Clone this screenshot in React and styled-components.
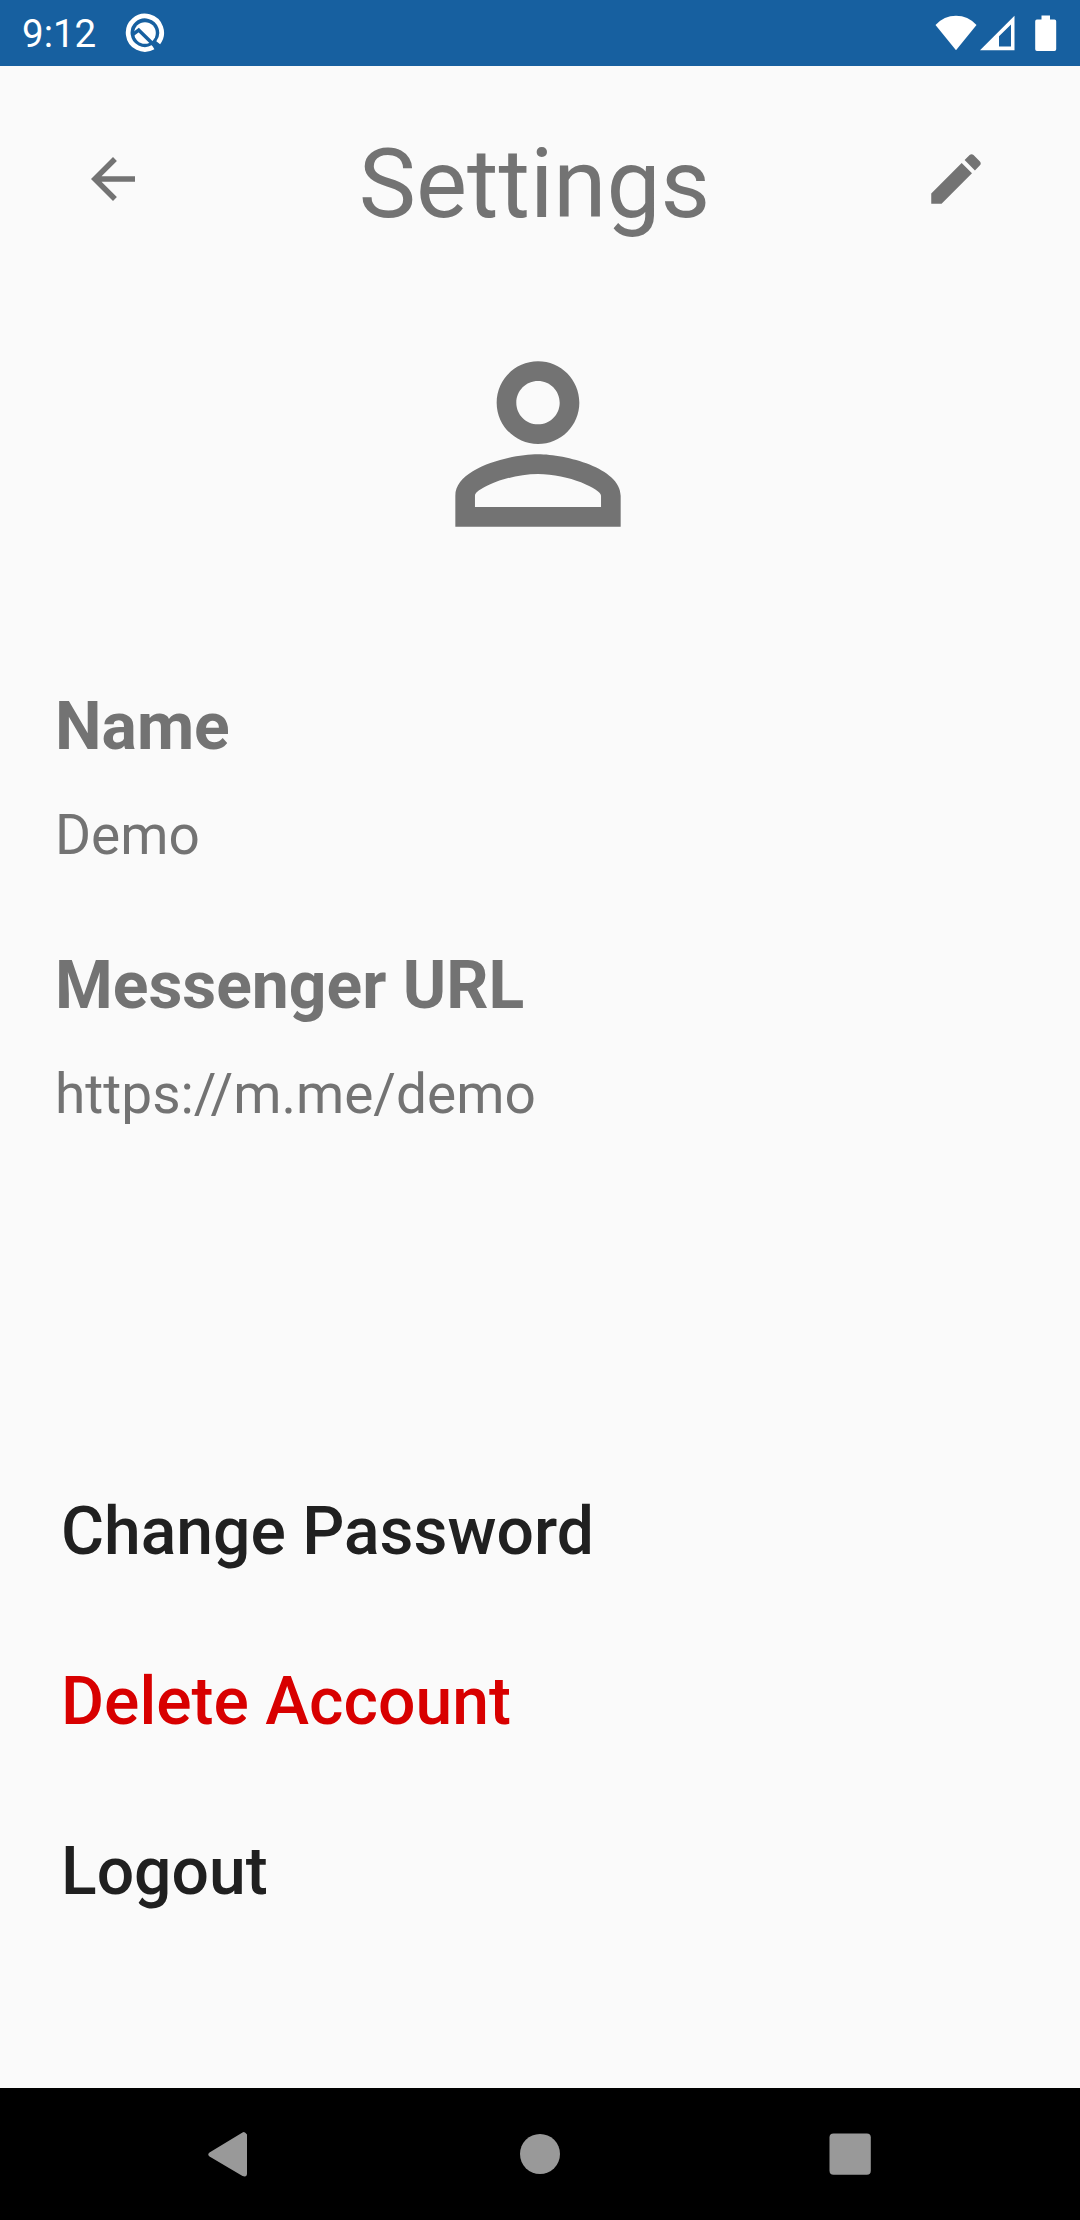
import React from "react";
import styled, { createGlobalStyle } from "styled-components";

const GlobalStyle = createGlobalStyle`
  * { box-sizing: border-box; }
  body { margin: 0; background: #fafafa; }
`;

const Screen = styled.div`
  display: flex;
  flex-direction: column;
  width: 1080px;
  height: 2220px;
  background: #fafafa;
  color: #737373;
  font-family: Roboto, "Liberation Sans", sans-serif;
`;

const StatusBar = styled.div`
  display: flex;
  justify-content: space-between;
  align-items: center;
  height: 66px;
  padding: 0 21px 0 22px;
  background: #1760a0;
  color: #fff;
`;

const StatusGroup = styled.div`
  display: flex;
  align-items: center;
  gap: ${(p) => p.$gap}px;
`;

const Clock = styled.span`
  font-size: 38.5px;
  line-height: 46px;
  padding-top: 2px;
`;

const Icon = styled.svg`
  display: block;
  flex: none;
  width: ${(p) => p.$w}px;
  height: ${(p) => p.$h || p.$w}px;
  fill: currentColor;
`;

const Header = styled.header`
  display: flex;
  justify-content: space-between;
  align-items: center;
  height: 226px;
  padding: 0 91px 0 80px;
`;

const IconButton = styled.button`
  padding: 0;
  border: 0;
  background: none;
  color: inherit;
`;

const Title = styled.h1`
  margin: 0;
  padding-top: 10px;
  font-size: 96.25px;
  font-weight: 400;
  line-height: 114px;
`;

const Avatar = styled.div`
  display: flex;
  justify-content: center;
  padding: 28px 4px 0 0;
`;

const Fields = styled.dl`
  display: flex;
  flex-direction: column;
  gap: 79px;
  margin: 120px 0 0;
  padding: 0 55px;
`;

const Field = styled.div`
  display: flex;
  flex-direction: column;
  gap: 37px;
`;

const Label = styled.dt`
  font-size: 66px;
  font-weight: 700;
  line-height: 78px;
`;

const Value = styled.dd`
  margin: 0;
  font-size: 55px;
  line-height: 65px;
`;

const Actions = styled.div`
  display: flex;
  flex-direction: column;
  align-items: flex-start;
  margin-top: auto;
  padding: 0 61px 131px;
`;

const Action = styled.button`
  height: 170px;
  padding: 0;
  border: 0;
  background: none;
  color: ${(p) => (p.$danger ? "#d80000" : "#202020")};
  font-family: inherit;
  font-size: 66px;
  font-weight: 500;
  line-height: 78px;
`;

const NavBar = styled.nav`
  display: grid;
  grid-template-columns: repeat(3, 310px);
  place-content: center;
  place-items: center;
  height: 132px;
  background: #000;
  color: #999;
`;

const fields = [
  { label: "Name", value: "Demo" },
  { label: "Messenger URL", value: "https://m.me/demo" },
];

const actions = [
  { text: "Change Password" },
  { text: "Delete Account", danger: true },
  { text: "Logout" },
];

export default function App() {
  return (
    <Screen>
      <GlobalStyle />
      <StatusBar>
        <StatusGroup $gap={29}>
          <Clock>9:12</Clock>
          <Icon $w={40} viewBox="0 0 40 40">
            <path
              d="M28.2 34.2A16.7 16.7 0 1 1 33.2 29.8"
              transform="translate(0 0)"
              fill="none"
              stroke="#fff"
              strokeWidth="4.8"
            />
            <circle cx="20" cy="20" r="10.8" />
            <path d="M7.6 21.6L13.7 17L31.5 34.5" fill="none" stroke="#1760a0" strokeWidth="3.6" />
          </Icon>
        </StatusGroup>
        <StatusGroup $gap={3}>
          <Icon $w={42} $h={36} viewBox="0 0 42 36">
            <path d="M.5 10Q9 .8 21 .8T41.500 10L21 35.200Z" />
          </Icon>
          <Icon $w={35} $h={36} viewBox="0 0 35 36">
            <path fillRule="evenodd" d="M0 35.200L34.500.800V35.200ZM19 31.500H31V9.500L19 21.300Z" />
          </Icon>
          <Icon $w={41} $h={36} viewBox="0 0 41 36">
            <path d="M23.500 .500H32V4.500H36.500Q38.200 4.500 38.200 6.200V34.300Q38.200 36 36.500 36H18.900Q17.200 36 17.200 34.300V6.200Q17.200 4.500 18.900 4.500H23.500Z" />
          </Icon>
        </StatusGroup>
      </StatusBar>

      <Header>
        <IconButton aria-label="Back">
          <Icon $w={66} viewBox="0 0 24 24">
            <path d="M20 11H7.830l5.590-5.590L12 4l-8 8 8 8 1.410-1.410L7.830 13H20v-2z" />
          </Icon>
        </IconButton>
        <Title>Settings</Title>
        <IconButton aria-label="Edit">
          <Icon $w={66} viewBox="0 0 24 24">
            <path d="M3 17.250V21h3.750L17.810 9.940l-3.750-3.750L3 17.250zM20.710 7.040c.390-.390.390-1.020 0-1.410l-2.340-2.340c-.390-.390-1.020-.390-1.410 0l-1.830 1.830 3.750 3.750 1.830-1.830z" />
          </Icon>
        </IconButton>
      </Header>

      <Avatar>
        <Icon $w={248} viewBox="0 0 24 24">
          <path d="M12 5.900c1.160 0 2.100.940 2.100 2.100s-.940 2.100-2.100 2.100S9.900 9.160 9.900 8s.940-2.100 2.100-2.100m0 9c2.970 0 6.100 1.460 6.100 2.100v1.100H5.900V17c0-.640 3.130-2.100 6.100-2.100M12 4C9.790 4 8 5.790 8 8s1.790 4 4 4 4-1.790 4-4-1.790-4-4-4zm0 9c-2.670 0-8 1.340-8 4v3h16v-3c0-2.660-5.330-4-8-4z" />
        </Icon>
      </Avatar>

      <Fields>
        {fields.map((f) => (
          <Field key={f.label}>
            <Label>{f.label}</Label>
            <Value>{f.value}</Value>
          </Field>
        ))}
      </Fields>

      <Actions>
        {actions.map((a) => (
          <Action key={a.text} $danger={a.danger}>
            {a.text}
          </Action>
        ))}
      </Actions>

      <NavBar>
        <Icon $w={48} viewBox="0 0 48 48">
          <path d="M41 4.500Q38.500 .800 36.500 2.500L3.500 22.500Q1 24.500 3.500 26.500L36.500 46Q41 47.500 41 43.500Z" />
        </Icon>
        <Icon $w={40} viewBox="0 0 40 40">
          <circle cx="20" cy="20" r="20" />
        </Icon>
        <Icon $w={42} viewBox="0 0 42 42">
          <rect x=".5" y=".5" width="41.300" height="41.300" rx="4" />
        </Icon>
      </NavBar>
    </Screen>
  );
}
